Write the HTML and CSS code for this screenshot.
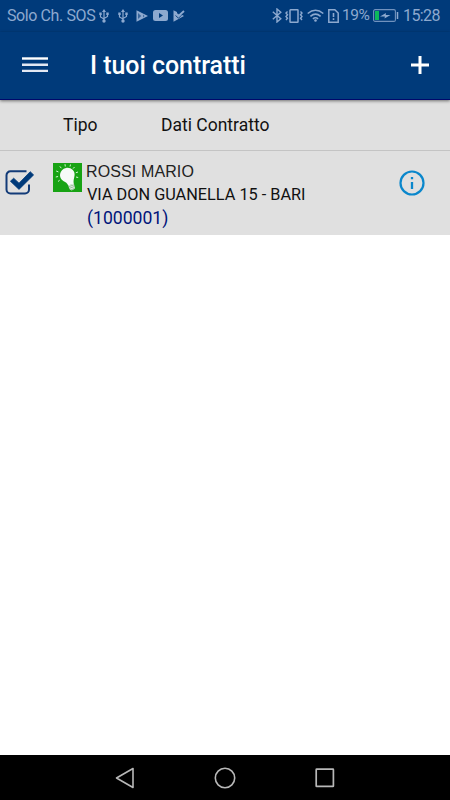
FILE: index.html
```html
<!DOCTYPE html>
<html lang="it">

<head>
    <meta charset="UTF-8">
    <meta name="viewport" content="width=device-width, initial-scale=1.0">
    <title>I tuoi contratti</title>
    <link rel="stylesheet" href="styles.css">
</head>

<body>
    <div class="status-bar">
        <div class="status-left">
            <span class="carrier">Solo Ch. SOS</span>
            <svg class="usb" width="10" height="14" viewBox="0 0 10 14">
                <path d="M5 2v10M1.5 5v3L5 10M8.5 5v2.5L5 9.5" fill="none" stroke="currentColor" stroke-width="1.2" />
                <path d="M5 0l2 3H3zM0.3 3.5h2.4V6H0.3zM7.3 3.5h2.4V6H7.3z" fill="currentColor" />
                <circle cx="5" cy="12" r="1.7" fill="currentColor" />
            </svg>
            <svg class="usb usb-second" width="10" height="14" viewBox="0 0 10 14">
                <path d="M5 2v10M1.5 5v3L5 10M8.5 5v2.5L5 9.5" fill="none" stroke="currentColor" stroke-width="1.2" />
                <path d="M5 0l2 3H3zM0.3 3.5h2.4V6H0.3zM7.3 3.5h2.4V6H7.3z" fill="currentColor" />
                <circle cx="5" cy="12" r="1.7" fill="currentColor" />
            </svg>
            <svg class="play" width="12" height="12" viewBox="0 0 12 12">
                <path d="M0.5 0.3L12 6 0.5 11.7z" fill="currentColor" />
                <path d="M2 3l3.2 3L2 9zM7 4.5L8.5 6 7 7.5" fill="#003a7a" fill-opacity="0.6" />
            </svg>
            <svg class="tube" width="15" height="11" viewBox="0 0 15 11">
                <rect width="15" height="11" rx="2.5" fill="currentColor" />
                <path d="M6 3l4 2.5L6 8z" fill="#003a7a" />
            </svg>
            <svg class="play-check" width="12" height="12" viewBox="0 0 12 12">
                <path d="M0.5 0.3L4 2v2.500l1.700 1.600L7.500 4l3.500 2L0.500 11.700z" fill="currentColor" />
                <path d="M2.500 5.500l3 2.700L10.500 3" fill="none" stroke="#003a7a" stroke-width="0.9" />
                <path d="M4 4l1.800 1.800L11 1" fill="none" stroke="currentColor" stroke-width="1.9" />
            </svg>
        </div>
        <div class="status-right">
            <svg class="bluetooth" width="10" height="15" viewBox="0 0 10 15">
                <path d="M0.8 3.8l8 7L5 14V1l3.800 3.200-8 7" fill="none" stroke="currentColor" stroke-width="1.4" />
            </svg>
            <svg class="vibrate" width="18" height="14" viewBox="0 0 18 14">
                <rect x="5" y="0.8" width="8" height="12.400" rx="0.5" fill="none" stroke="currentColor" stroke-width="1.5" />
                <path d="M2.5 2.5L1 4l1.5 1.7L1 7.5l1.5 1.7L1 11M15.5 2.5L17 4l-1.5 1.7L17 7.5l-1.5 1.7L17 11" fill="none" stroke="currentColor" stroke-width="1.4" />
            </svg>
            <svg class="wifi" width="17" height="13" viewBox="0 0 17 13">
                <path d="M0.7 4.5Q8.5-2 16.3 4.5M3.4 7.3q5.1-4.3 10.2 0M5.9 9.8q2.6-2 5.2 0" fill="none" stroke="currentColor" stroke-width="1.6" />
                <circle cx="8.5" cy="11.5" r="1.3" fill="currentColor" />
            </svg>
            <svg class="sim" width="11" height="14" viewBox="0 0 11 14">
                <path d="M0.8 0.7h6l3.4 3.3v9.3H0.8z" fill="none" stroke="currentColor" stroke-width="1.5" />
                <path d="M5.5 4v4M5.5 9.3v1.7" stroke="currentColor" stroke-width="1.6" />
            </svg>
            <span class="percent">19%</span>
            <svg class="battery" width="26" height="13" viewBox="0 0 26 13">
                <rect x="0.6" y="0.6" width="21.8" height="11.8" rx="1.5" fill="none" stroke="currentColor" stroke-opacity="0.8" stroke-width="1.1" />
                <rect x="2" y="2" width="4" height="9" fill="#0cb75b" />
                <path d="M7 7.5l6-3.5-0.3 2H17.5L11.5 9.5l0.4-2z" fill="currentColor" />
                <path d="M24.5 3v7" stroke="currentColor" stroke-width="1.5" />
            </svg>
            <span class="time">15:28</span>
        </div>
    </div>

    <div class="app-bar">
        <svg class="menu-icon" width="26" height="16" viewBox="0 0 26 16">
            <path d="M0 1.5h26" stroke="#fff" stroke-width="2.4" />
            <path d="M0 7.7h26M0 13.9h26" stroke="#e3e8f3" stroke-width="2.4" />
        </svg>
        <h1>I tuoi contratti</h1>
        <svg class="add-icon" width="18" height="18" viewBox="0 0 18 18">
            <path d="M9 0v18M0 9h18" stroke="#fff" stroke-width="3" />
        </svg>
    </div>

    <div class="content">
        <div class="list-header">
            <span class="col-type">Tipo</span>
            <span class="col-data">Dati Contratto</span>
        </div>
        <div class="contract">
            <svg class="check" width="29" height="25" viewBox="0 0 29 25">
                <path d="M21.5 1.3H5.5a4 4 0 0 0-4 4v14.2a4 4 0 0 0 4 4H20a4 4 0 0 0 4-4v-5" fill="none" stroke="#123b78" stroke-width="2" />
                <path d="M5.4 11.2l3.3-3 5.3 5L25.2 1.7l3.4 3.2L14 19.4z" fill="#003a7a" stroke="#003a7a" stroke-width="0.8" stroke-linejoin="round" />
            </svg>
            <svg class="bulb" width="29" height="29" viewBox="0 0 29 29">
                <rect width="29" height="29" fill="#18a314" />
                <path d="M13 5c4.5-1 8.7 2.3 8.6 6.5 0 3-1.5 5-0.8 9.3l-5.5 1.7c-1.2-2.6-2.6-3.3-4.6-4.300C4.800 14.900 6.300 6.500 13 5z" fill="#f7faf7" />
                <path d="M15.3 22.3l5.5-1.8 1.3 5-3.4 2-2.3-1.5z" fill="#e4eee4" />
                <path d="M15.5 23.7l5.7-1.9M16.1 25.4l5.4-1.9M18 26.9l3.8-1.6" stroke="#79a879" stroke-width="0.7" />
                <path d="M12 1.2l0.3 2.3M6.8 3.3l1.5 1.9M3.2 8l2.2 0.9M2.8 14l2.3-0.5M5 18.5l1.7-1.3M17.5 1.5L17 3.5M21.5 4l-1.4 1.6M25 9l-2.2 0.8M25.2 14.5L23 14" stroke="#d5f3d3" />
            </svg>
            <div class="details">
                <div class="name">ROSSI MARIO</div>
                <div class="address">VIA DON GUANELLA 15 - BARI</div>
                <div class="code">(1000001)</div>
            </div>
            <svg class="info" width="26" height="26" viewBox="0 0 26 26">
                <circle cx="13" cy="13" r="11.5" fill="none" stroke="#0a87cc" stroke-width="2.2" />
                <path d="M13 12v7M13 7v2.3" stroke="#0a87cc" stroke-width="2.3" />
            </svg>
        </div>
    </div>

    <div class="nav-bar">
        <svg width="20" height="22" viewBox="0 0 20 22">
            <path d="M1.5 11L18 1.5v19z" fill="none" stroke="#b8b8b8" stroke-width="1.6" stroke-linejoin="round" />
        </svg>
        <svg width="22" height="22" viewBox="0 0 22 22">
            <circle cx="11" cy="11" r="9.7" fill="none" stroke="#b8b8b8" stroke-width="1.6" />
        </svg>
        <svg width="20" height="20" viewBox="0 0 20 20">
            <rect x="1.2" y="1.2" width="17.2" height="17.2" rx="0.5" fill="none" stroke="#b8b8b8" stroke-width="1.7" />
        </svg>
    </div>
</body>

</html>
```
FILE: styles.css
```css
* {
    box-sizing: border-box;
}

body {
    margin: 0;
    height: 100vh;
    display: flex;
    flex-direction: column;
    overflow: hidden;
    background: #fff;
    color: #111;
    font-family: Roboto, sans-serif;
}

svg {
    display: block;
    flex: none;
}

.status-bar {
    height: 32px;
    flex: none;
    display: flex;
    justify-content: space-between;
    padding: 0 10px 0 7px;
    background: #003a7a;
    color: #8da9cf;
    font-size: 16px;
    line-height: 31px;
    white-space: nowrap;
}

.status-left,
.status-right {
    display: flex;
    align-items: center;
    height: 31px;
}

.carrier {
    width: 92px;
    letter-spacing: -0.4px;
}

.usb-second {
    margin-left: 9px;
}

.play {
    margin-left: 8px;
}

.tube {
    margin-left: 5px;
}

.play-check {
    margin-left: 5px;
}

.vibrate {
    margin-left: 3px;
}

.wifi {
    margin-left: 4px;
}

.sim {
    margin-left: 4px;
}

.percent {
    width: 31px;
    margin-left: 3px;
    font-size: 15.5px;
    letter-spacing: -0.5px;
}

.time {
    width: 37px;
    margin-left: 4px;
    letter-spacing: -0.6px;
}

.app-bar {
    height: 68px;
    flex: none;
    display: flex;
    align-items: center;
    padding: 0 21px 0 22px;
    background: #003a7a;
    border-bottom: 1px solid #00086b;
    color: #fff;
    box-shadow: 0 1px 3px rgba(0, 0, 0, 0.5);
    z-index: 1;
}

.menu-icon {
    margin-bottom: 2px;
}

.app-bar h1 {
    flex: 1;
    margin: 1px 0 0 42px;
    font-size: 25px;
    font-weight: 500;
    line-height: 30px;
    letter-spacing: -0.05px;
}

.add-icon {
    margin-bottom: 2px;
}

.content {
    flex: 1;
}

.list-header {
    display: flex;
    height: 51px;
    padding-left: 63px;
    background: #e0e0e0;
    border-bottom: 1px solid #c4c4c4;
    font-size: 17.5px;
    line-height: 51px;
}

.col-type {
    width: 98px;
}

.contract {
    display: flex;
    align-items: flex-start;
    height: 84px;
    padding: 11px 25px 0 5px;
    background: #e0e0e0;
}

.check {
    margin-top: 8px;
}

.bulb {
    margin-left: 19px;
    margin-top: 1px;
}

.details {
    flex: 1;
    margin-left: 4px;
    white-space: nowrap;
}

.name {
    font-family: "Liberation Sans", Arial, sans-serif;
    font-size: 16px;
    line-height: 20px;
    letter-spacing: 0.12px;
    color: #222;
}

.address {
    font-size: 16.3px;
    line-height: 24px;
    padding: 1px 0 0 1px;
}

.code {
    font-size: 17.6px;
    line-height: 22px;
    padding-left: 1px;
    color: #00147a;
}

.info {
    margin-top: 8px;
}

.nav-bar {
    height: 45px;
    flex: none;
    display: flex;
    align-items: center;
    justify-content: space-between;
    padding: 0 115px;
    background: #000;
}
```
